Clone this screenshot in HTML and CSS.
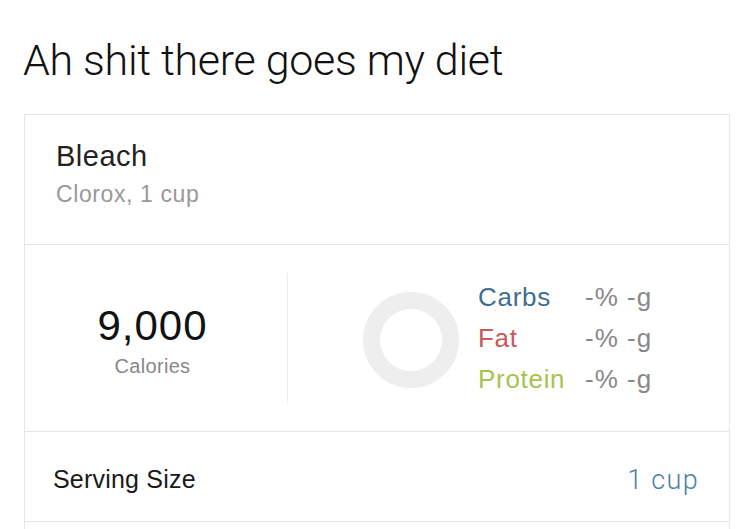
FILE: index.html
```html
<!DOCTYPE html>
<html>
<head>
<meta charset="utf-8">
<link rel="stylesheet" href="styles.css">
</head>
<body>
<h1 class="title">Ah shit there goes my diet</h1>
<div class="card">
  <div class="head">
    <div class="name">Bleach</div>
    <div class="brand">Clorox, 1 cup</div>
  </div>
  <div class="summary">
    <div class="cals">
      <div class="cal-num">9,000</div>
      <div class="cal-label">Calories</div>
    </div>
    <div class="vline"></div>
    <div class="macros">
      <svg class="donut" width="96" height="96" viewBox="0 0 96 96">
        <circle cx="48" cy="48" r="39.5" fill="none" stroke="#eeeeee" stroke-width="17"/>
      </svg>
      <div class="legend">
        <span class="lab carbs">Carbs</span><span class="val">-% -g</span>
        <span class="lab fat">Fat</span><span class="val">-% -g</span>
        <span class="lab protein">Protein</span><span class="val">-% -g</span>
      </div>
    </div>
  </div>
  <div class="serving">
    <span class="s-label">Serving Size</span>
    <span class="s-val">1 cup</span>
  </div>
  <div class="rest"></div>
</div>
</body>
</html>
```
FILE: styles.css
```css
html, body {
  margin: 0;
  padding: 0;
  background: #ffffff;
}
body {
  font-family: "Liberation Sans", Arial, sans-serif;
  color: #1a1a1a;
  overflow: hidden;
}
.title {
  margin: 0;
  padding: 35px 0 0 23px;
  height: 78px;
  box-sizing: border-box;
  font-family: Roboto, "Liberation Sans", sans-serif;
  font-weight: 300;
  font-size: 43px;
  line-height: 50px;
  color: #111;
  letter-spacing: -0.3px;
}
.card {
  margin: 36px 0 0 24px;
  width: 706px;
  box-sizing: border-box;
  border: 1px solid #e6e6e6;
  border-bottom: none;
}
.head {
  height: 130px;
  box-sizing: border-box;
  padding: 23px 0 0 31px;
  border-bottom: 1px solid #e6e6e6;
}
.name {
  font-size: 29px;
  line-height: 36px;
  color: #222;
  letter-spacing: 0.5px;
}
.brand {
  margin-top: 6px;
  font-size: 23px;
  line-height: 28px;
  color: #999;
  letter-spacing: 0.6px;
}
.summary {
  height: 187px;
  box-sizing: border-box;
  border-bottom: 1px solid #e6e6e6;
  display: flex;
  align-items: center;
}
.cals {
  width: 255px;
  margin-right: 7px;
  text-align: center;
  margin-top: 7px;
}
.cal-num {
  font-size: 42px;
  line-height: 44px;
  color: #111;
  letter-spacing: 1px;
}
.cal-label {
  font-size: 20px;
  line-height: 26px;
  color: #888;
  margin-top: 5px;
  letter-spacing: 0.3px;
}
.vline {
  width: 1px;
  height: 130px;
  background: #ececec;
}
.macros {
  display: flex;
  align-items: center;
  padding-left: 75px;
}
.donut {
  display: block;
  margin-top: 4px;
}
.legend {
  margin-left: 19px;
  display: grid;
  grid-template-columns: 107px auto;
  row-gap: 12px;
  font-size: 26px;
  line-height: 29px;
  margin-top: 0px;
}
.lab { letter-spacing: 0.7px; }
.lab.carbs { color: #3f6d90; }
.lab.fat { color: #c85a5e; }
.lab.protein { color: #a6c44c; }
.val { color: #888; letter-spacing: 1px; }
.serving {
  height: 90px;
  box-sizing: border-box;
  border-bottom: 1px solid #e6e6e6;
  display: flex;
  align-items: center;
  justify-content: space-between;
  padding: 6px 30px 0 28px;
}
.s-label {
  font-size: 25px;
  color: #1a1a1a;
  letter-spacing: 0.2px;
}
.s-val {
  font-size: 27px;
  color: #4b7ea6;
  font-family: Roboto, "Liberation Sans", sans-serif;
  font-weight: 300;
  letter-spacing: 1.3px;
}
.rest {
  height: 40px;
}
```
